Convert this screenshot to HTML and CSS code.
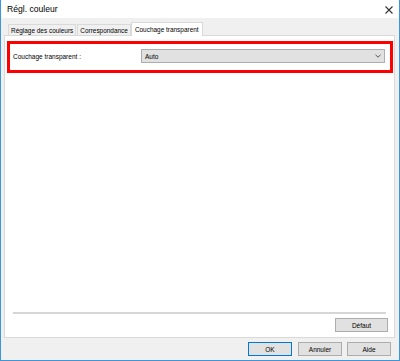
FILE: index.html
```html
<!DOCTYPE html>
<html lang="fr">
<head>
    <meta charset="UTF-8">
    <meta name="viewport" content="width=device-width, initial-scale=1.0">
    <title>Régl. couleur</title>
    <link rel="stylesheet" href="styles.css">
</head>
<body>
    <div class="window">
        <div class="titlebar">
            <span class="title">Régl. couleur</span>
            <svg class="close" width="8" height="8" viewBox="0 0 8 8">
                <path d="M0.5 0.5 L7.5 7.5 M7.5 0.5 L0.5 7.5" stroke="#333" stroke-width="1.1" fill="none"/>
            </svg>
        </div>
        <div class="content">
            <div class="tabs">
                <div class="tab">Réglage des couleurs</div>
                <div class="tab">Correspondance</div>
                <div class="tab active">Couchage transparent</div>
            </div>
            <div class="panel">
                <div class="highlight">
                    <span class="label">Couchage transparent :</span>
                    <div class="select">
                        <span>Auto</span>
                        <svg width="6" height="4" viewBox="0 0 6 4">
                            <path d="M0.5 0.8 L3 3.2 L5.5 0.8" stroke="#555" stroke-width="1" fill="none"/>
                        </svg>
                    </div>
                </div>
                <div class="spacer"></div>
                <div class="separator"></div>
                <div class="panel-actions">
                    <button class="btn btn-default">Défaut</button>
                </div>
            </div>
            <div class="footer">
                <button class="btn btn-ok">OK</button>
                <button class="btn">Annuler</button>
                <button class="btn">Aide</button>
            </div>
        </div>
    </div>
</body>
</html>
```

FILE: styles.css
```css
body { margin: 0; font-family: "Liberation Sans", Arial, sans-serif; color: #000; }
.window { width: 400px; height: 361px; box-sizing: border-box; border: 1px solid #3c96dc; border-top: none; display: flex; flex-direction: column; background: #fff; }
.titlebar { height: 18px; display: flex; align-items: center; justify-content: space-between; padding: 0 6px 0 6px; font-size: 8.6px; }
.close { margin-top: 1px; }
.content { flex: 1; background: #f0f0f0; display: flex; flex-direction: column; padding: 4px 4px 0 3px; }
.tabs { display: flex; align-items: flex-end; padding-left: 4px; height: 13px; }
.tab { height: 11px; line-height: 11px; padding: 0 2px; font-size: 6.45px; border: 1px solid #d9d9d9; border-bottom: none; box-sizing: border-box; background: #f0f0f0; margin-right: 1px; white-space: nowrap; }
.tab.active { height: 14px; line-height: 13px; background: #fff; margin-bottom: -1px; margin-left: -1px; position: relative; z-index: 1; padding: 0 3px; }
.panel { flex: 1; border: 1px solid #d9d9d9; background: #fff; display: flex; flex-direction: column; }
.highlight { margin: 5px 1px 0 2px; border: 3px solid #f00; display: flex; align-items: center; padding: 5px 5px 7px 3px; }
.label { font-size: 6.5px; width: 128px; }
.select { flex: 1; height: 14px; box-sizing: border-box; background: #e1e1e1; border: 1px solid #adadad; display: flex; align-items: center; justify-content: space-between; padding: 0 3px 0 3px; font-size: 6.5px; }
.spacer { flex: 1; }
.separator { margin: 0 8px 0 8px; height: 2px; background: #d6d6d6; border-bottom: 1px solid #fff; }
.panel-actions { display: flex; justify-content: flex-end; padding: 3px 6px 5px 0; }
.btn { font-family: "Liberation Sans", Arial, sans-serif; font-size: 6.5px; background: #e1e1e1; border: 1px solid #adadad; height: 14px; width: 44px; padding: 0; margin: 0; color: #000; }
.btn-default { width: 53px; }
.footer { height: 22px; display: flex; align-items: center; justify-content: flex-end; gap: 5px; padding-right: 4px; }
.btn-ok { border-color: #0078d7; margin-right: 1px; }
```
